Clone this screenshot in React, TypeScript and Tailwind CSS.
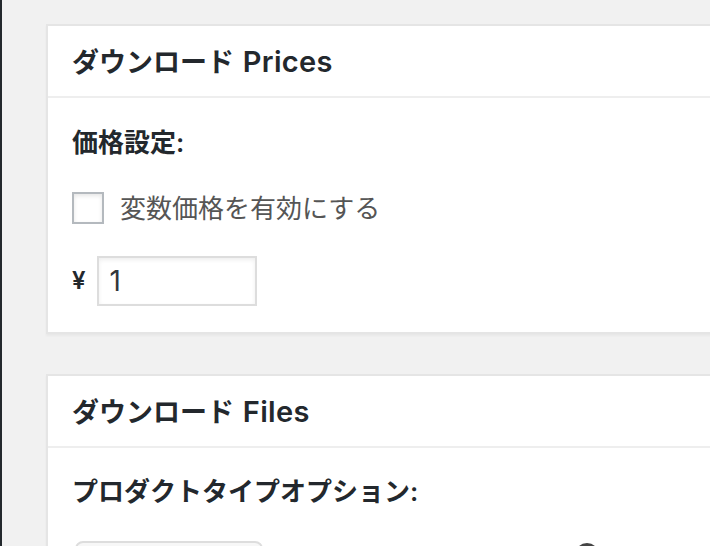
import React from 'react';

const font = { fontFamily: '"Inter", "Noto Sans CJK JP", sans-serif' };

function Card({ jp, en, children }: { jp: string; en: string; children: React.ReactNode }) {
  return (
    <div className="w-[700px] bg-white border-2 border-[#e5e5e5] shadow-[0_2px_2px_rgba(0,0,0,0.04)]">
      <div className="h-[72px] flex items-center px-[24px] border-b-2 border-[#eeeeee]">
        <h2 className="text-[27px] font-semibold text-[#23282d] leading-none">
          {jp} <span className="ml-[2px] text-[29px] tracking-[0.3px]">{en}</span>
        </h2>
      </div>
      {children}
    </div>
  );
}

export default function App() {
  return (
    <div className="w-[710px] h-[546px] overflow-hidden flex bg-[#f1f1f1]" style={font}>
      <div className="w-[2px] shrink-0 bg-[#23282d]" />
      <div className="flex-1 flex flex-col pl-[44px] pt-[24px]">
        <Card jp="ダウンロード" en="Prices">
          <div className="px-[24px] pt-[27px] pb-[26px] flex flex-col">
            <p className="text-[26px] leading-[36px] font-semibold text-[#23282d]">価格設定:</p>
            <label className="mt-[31px] flex items-center h-[32px] gap-[16px]">
              <span className="w-[32px] h-[32px] border-2 border-[#b4b9be] bg-white shadow-[inset_0_2px_4px_rgba(0,0,0,0.1)]" />
              <span className="text-[26px] text-[#555555]">変数価格を有効にする</span>
            </label>
            <div className="mt-[32px] flex items-center gap-[11px]">
              <span className="text-[24px] text-[#23282d] font-semibold">¥</span>
              <div className="w-[160px] h-[50px] border-2 border-[#dddddd] flex items-center px-[11px] shadow-[inset_0_2px_4px_rgba(0,0,0,0.07)]">
                <span className="text-[28px] text-[#32373c]">1</span>
              </div>
            </div>
          </div>
        </Card>
        <div className="mt-[40px]">
          <Card jp="ダウンロード" en="Files">
            <div className="px-[24px] pt-[26px] flex flex-col">
              <p className="text-[26px] leading-[36px] font-semibold text-[#23282d]">プロダクトタイプオプション:</p>
              <div className="mt-[31px] flex items-start">
                <div className="ml-[3px] w-[188px] h-[40px] border-2 border-[#dddddd] rounded-[8px] bg-[#f7f7f7]" />
                <div className="ml-[312px] mt-[2px] w-[24px] h-[24px] rounded-full bg-[#444444]" />
              </div>
            </div>
          </Card>
        </div>
      </div>
    </div>
  );
}
